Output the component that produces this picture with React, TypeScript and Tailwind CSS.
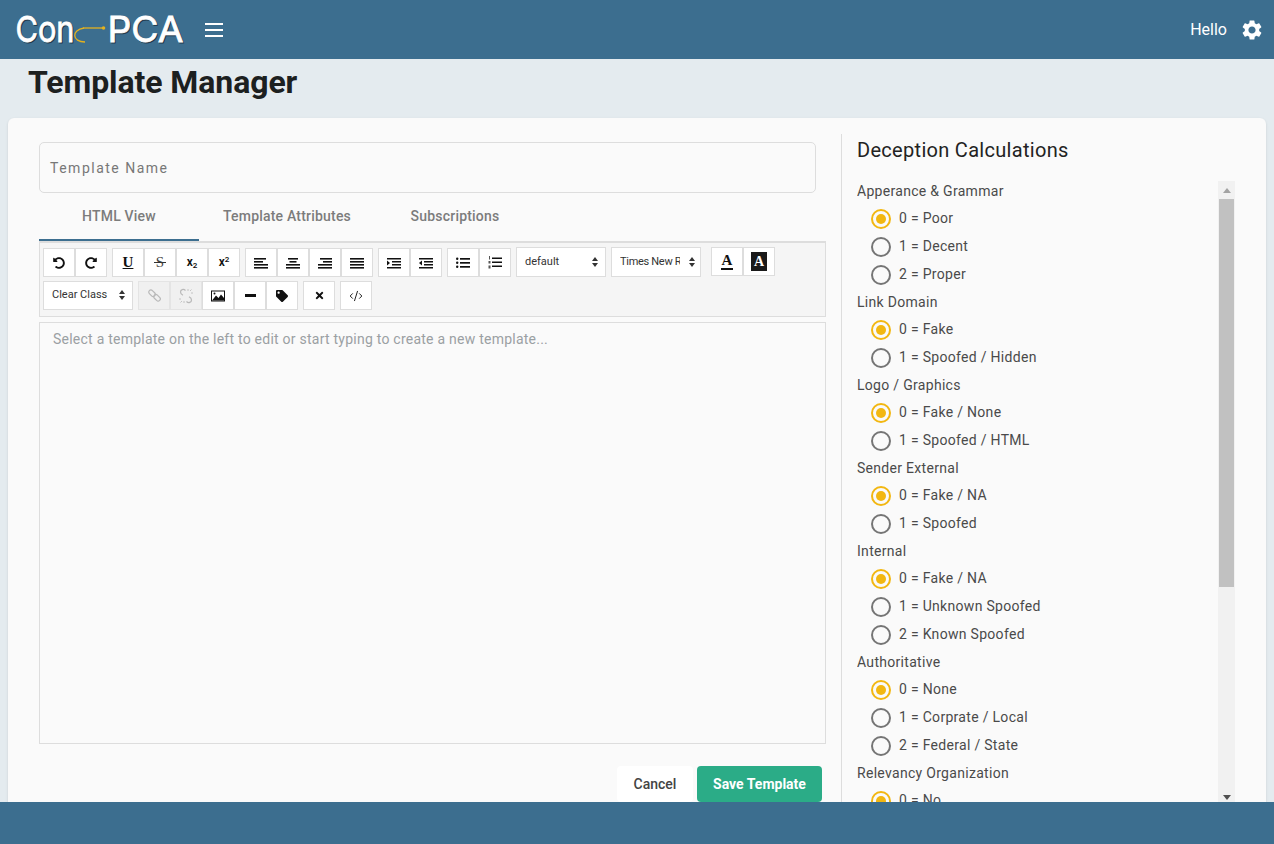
import React from 'react';
import { CodeXml } from 'lucide-react';
import { MdSettings } from 'react-icons/md';
import { FaTag, FaTimes, FaUndoAlt, FaRedoAlt } from 'react-icons/fa';

const groups = [
  { label: 'Apperance & Grammar', options: ['0 = Poor', '1 = Decent', '2 = Proper'] },
  { label: 'Link Domain', options: ['0 = Fake', '1 = Spoofed / Hidden'] },
  { label: 'Logo / Graphics', options: ['0 = Fake / None', '1 = Spoofed / HTML'] },
  { label: 'Sender External', options: ['0 = Fake / NA', '1 = Spoofed'] },
  { label: 'Internal', options: ['0 = Fake / NA', '1 = Unknown Spoofed', '2 = Known Spoofed'] },
  { label: 'Authoritative', options: ['0 = None', '1 = Corprate / Local', '2 = Federal / State'] },
  { label: 'Relevancy Organization', options: ['0 = No', '1 = Yes'] },
];

function Bars({ rows }: { rows: number[][] }) {
  return (
    <svg width="14" height="12" viewBox="0 0 14 12" fill="#111">
      {rows.map((r, i) => (
        <rect key={i} x={r[0]} y={r[1]} width={r[2]} height="1.6" />
      ))}
    </svg>
  );
}

const alignLeft = [[0, 1, 12], [0, 4, 9], [0, 7, 14], [0, 10, 14]];
const alignCenter = [[2, 1, 10], [3.5, 4, 7], [0, 7, 14], [0, 10, 14]];
const alignRight = [[2, 1, 12], [5, 4, 9], [0, 7, 14], [0, 10, 14]];
const alignFull = [[0, 1, 14], [0, 4, 14], [0, 7, 14], [0, 10, 14]];

function Indent({ flip }: { flip?: boolean }) {
  return (
    <svg width="14" height="12" viewBox="0 0 14 12" fill="#111">
      <rect x="0" y="1" width="14" height="1.5" />
      <rect x="5" y="4" width="9" height="1.5" />
      <rect x="5" y="7" width="9" height="1.5" />
      <rect x="0" y="10" width="14" height="1.5" />
      {flip ? <path d="M3 3.6 L0 6 L3 8.4 Z" /> : <path d="M0 3.6 L3 6 L0 8.4 Z" />}
    </svg>
  );
}

function BulletList() {
  return (
    <svg width="14" height="12" viewBox="0 0 14 12" fill="#111">
      <rect x="4" y="1" width="10" height="1.7" />
      <rect x="4" y="5" width="10" height="1.7" />
      <rect x="4" y="9" width="10" height="1.7" />
      <circle cx="1.2" cy="1.8" r="1.2" />
      <circle cx="1.2" cy="5.8" r="1.2" />
      <circle cx="1.2" cy="9.8" r="1.2" />
    </svg>
  );
}

function NumberList() {
  return (
    <svg width="14" height="13" viewBox="0 0 14 13" fill="#111">
      <rect x="4" y="1.5" width="10" height="1.5" />
      <rect x="4" y="5.5" width="10" height="1.5" />
      <rect x="4" y="9.5" width="10" height="1.5" />
      <rect x="1" y="0" width="1" height="3.5" fill="#555" />
      <rect x="0.5" y="5" width="2" height="2.5" fill="#555" />
      <rect x="0.5" y="9.5" width="2" height="3" fill="#555" />
    </svg>
  );
}

function Picture() {
  return (
    <svg width="14" height="12" viewBox="0 0 14 12">
      <rect x="0.5" y="1" width="13" height="10" fill="#fff" stroke="#111" />
      <path d="M1 10.5 L5 5.5 L7.5 8 L10 4.5 L13 8 V10.5 Z" fill="#111" />
      <circle cx="3.5" cy="3.4" r="1" fill="#111" />
    </svg>
  );
}

function ChainLink() {
  return (
    <svg width="13" height="13" viewBox="0 0 14 14" fill="none" stroke="#a0a0a0" strokeWidth="1.3">
      <rect x="0.3" y="2.2" width="8" height="4.6" rx="2.3" transform="rotate(45 4.3 4.5)" />
      <rect x="5.7" y="7.2" width="8" height="4.6" rx="2.3" transform="rotate(45 9.7 9.5)" />
    </svg>
  );
}

function ChainBroken() {
  return (
    <svg width="14" height="16" viewBox="0 0 14 16" fill="none" stroke="#a0a0a0" strokeWidth="1.2">
      <path d="M6.5 2.5 C4.5 0.5 1.5 1.5 1.5 4 C1.5 5.5 2.5 6.5 4 7.2" />
      <path d="M7.5 13.5 C9.5 15.5 12.5 14.5 12.5 12 C12.5 10.5 11.5 9.5 10 8.8" />
      <path d="M9 1 V3 M11 3 L12.5 1.5 M12 5 H14 M0 11 H2 M1.5 14.5 L3 13 M5 13 V15" strokeWidth="0.8" />
    </svg>
  );
}

function Carets() {
  return (
    <svg width="6" height="10" viewBox="0 0 6 10" fill="#333">
      <path d="M3 0 L6 4 H0 Z" />
      <path d="M3 10 L0 6 H6 Z" />
    </svg>
  );
}

function Btn({ children, disabled }: { children: React.ReactNode; disabled?: boolean }) {
  return (
    <div className={`w-8 h-[29px] flex items-center justify-center border border-[#dddddd] ${disabled ? 'bg-[#eeeeee] opacity-70' : 'bg-white'}`}>
      {children}
    </div>
  );
}

function Sel({ text, className }: { text: string; className: string }) {
  return (
    <div className={`h-[30px] flex items-center justify-between bg-white border border-[#dddddd] text-[11px] text-[#333333] ${className}`}>
      <span className="whitespace-nowrap">{text}</span>
      <Carets />
    </div>
  );
}

function Radio({ checked, label }: { checked: boolean; label: string }) {
  return (
    <div className="h-7 flex items-center pl-[14px] gap-2">
      <span className={`mt-px w-5 h-5 rounded-full border-2 flex items-center justify-center ${checked ? 'border-[#f2b711]' : 'border-[#757575]'}`}>
        {checked && <span className="w-[10px] h-[10px] rounded-full bg-[#f2b711]" />}
      </span>
      <span>{label}</span>
    </div>
  );
}

function Logo() {
  const font = '"Inter", "Liberation Sans", sans-serif';
  return (
    <svg width="172" height="44" viewBox="0 0 172 44" className="block">
      <g fontFamily={font} fontSize="36" fontWeight="400">
        <g fill="#22394a" stroke="#22394a" strokeWidth="0.8">
          <text x="1.5" y="34.5" textLength="59" lengthAdjust="spacingAndGlyphs">Con</text>
          <text x="93.5" y="34.5" textLength="76" lengthAdjust="spacingAndGlyphs">PCA</text>
        </g>
        <g fill="#ffffff" stroke="#ffffff" strokeWidth="0.8">
          <text x="0.5" y="33.5" textLength="59" lengthAdjust="spacingAndGlyphs">Con</text>
          <text x="92.5" y="33.5" textLength="76" lengthAdjust="spacingAndGlyphs">PCA</text>
        </g>
      </g>
      <path d="M68 20 H88" stroke="#e3b11f" strokeWidth="1.3" fill="none" />
      <circle cx="88.5" cy="20" r="1.8" fill="#e3b11f" />
      <path d="M69 20 C56 22 57 34 70 34" stroke="#e3b11f" strokeWidth="1.3" fill="none" />
    </svg>
  );
}

export default function App() {
  return (
    <div className="h-[844px] flex flex-col overflow-hidden bg-[#e4ebef] font-['Roboto',sans-serif] text-sm text-[#333333]">
      <header className="h-[59px] shrink-0 bg-[#3c6e8f] flex items-center pl-[15px] pr-[10px] text-white">
        <Logo />
        <div className="ml-[18px] w-[18px] flex flex-col gap-[4px]">
          <span className="h-[2px] bg-white" />
          <span className="h-[2px] bg-white" />
          <span className="h-[2px] bg-white" />
        </div>
        <span className="ml-auto text-base">Hello</span>
        <MdSettings className="ml-[13px] text-[24px]" />
      </header>

      <main className="flex-1 min-h-0 overflow-hidden">
        <h1 className="h-[59px] pl-[28px] pt-[3px] text-[32px] leading-[40px] font-bold tracking-[-0.08px] text-[#1c2020]">Template Manager</h1>
        <div className="mx-2 h-[700px] rounded-md bg-[#fafafa] shadow-sm flex">
          <div className="ml-[31px] w-[787px] pt-6">
            <div className="w-[777px] h-[51px] flex items-center px-[10px] border border-[#dddddd] rounded-[5px] tracking-[1.5px] text-[#777777]">
              Template Name
            </div>
            <div className="h-[48px] flex gap-2 text-[#7c7c7c] font-medium tracking-[0.2px]">
              <div className="w-40 pb-px flex items-center justify-center border-b-2 border-[#3c6e8f]">HTML View</div>
              <div className="w-40 pb-[3px] flex items-center justify-center">Template Attributes</div>
              <div className="w-40 pb-[3px] flex items-center justify-center">Subscriptions</div>
            </div>
            <div className="h-[76px] bg-[#f5f5f5] border border-t-2 border-[#dddddd] px-[3px] pt-[5px]">
              <div className="flex gap-[5px] items-start">
                <div className="flex">
                  <Btn><FaUndoAlt size={12} color="#111" /></Btn>
                  <Btn><FaRedoAlt size={12} color="#111" /></Btn>
                </div>
                <div className="flex text-[#111111]">
                  <Btn><span className="font-['Liberation_Serif',serif] font-semibold text-[15px] underline">U</span></Btn>
                  <Btn>
                    <span className="relative px-[2px] font-['Liberation_Serif',serif] text-[15px] text-[#444444]">
                      S
                      <span className="absolute left-0 right-0 top-[10px] h-px bg-[#333333]" />
                    </span>
                  </Btn>
                  <Btn><span className="font-semibold text-[12px]">x<sub className="text-[8px]">2</sub></span></Btn>
                  <Btn><span className="font-semibold text-[12px]">x<sup className="text-[8px]">2</sup></span></Btn>
                </div>
                <div className="flex">
                  <Btn><Bars rows={alignLeft} /></Btn>
                  <Btn><Bars rows={alignCenter} /></Btn>
                  <Btn><Bars rows={alignRight} /></Btn>
                  <Btn><Bars rows={alignFull} /></Btn>
                </div>
                <div className="flex">
                  <Btn><Indent /></Btn>
                  <Btn><Indent flip /></Btn>
                </div>
                <div className="flex">
                  <Btn><BulletList /></Btn>
                  <Btn><NumberList /></Btn>
                </div>
                <Sel text="default" className="w-[90px] pl-2 pr-[7px] -mt-px" />
                <Sel text="Times New Roman" className="w-[90px] pl-2 pr-[5px] -mt-px tracking-[-0.3px] [&>span]:w-[60px] [&>span]:overflow-hidden" />
                <div className="flex ml-[5px] -mt-px">
                  <Btn>
                    <span className="font-['Liberation_Serif',serif] font-bold text-[15px] leading-[15px] text-[#111111] border-b-2 border-[#111111] px-px">A</span>
                  </Btn>
                  <Btn>
                    <span className="w-4 h-[19px] flex items-center justify-center bg-[#1a1a1a] text-white font-['Liberation_Serif',serif] font-bold text-[14px]">A</span>
                  </Btn>
                </div>
              </div>
              <div className="flex gap-[5px] mt-[4px]">
                <div className="w-[90px] h-[29px] pb-px flex items-center justify-between pl-2 pr-[7px] bg-white border border-[#dddddd] text-[11px]">
                  Clear Class
                  <Carets />
                </div>
                <div className="flex">
                  <Btn disabled><ChainLink /></Btn>
                  <Btn disabled><ChainBroken /></Btn>
                  <Btn><Picture /></Btn>
                  <Btn><span className="w-[11px] h-[3px] bg-[#111111]" /></Btn>
                  <Btn><FaTag size={12} color="#111" /></Btn>
                </div>
                <Btn><FaTimes size={11} color="#111" /></Btn>
                <Btn><CodeXml size={14} color="#111" strokeWidth={1.6} /></Btn>
              </div>
            </div>
            <div className="mt-[5px] h-[422px] border border-[#dddddd] px-[13px] pt-[6px] text-[#9aa0a3] tracking-[0.24px]">
              Select a template on the left to edit or start typing to create a new template...
            </div>
            <div className="mt-[22px] pr-1 flex justify-end gap-1 font-medium">
              <button className="w-[76px] h-9 rounded bg-white text-[#444444]">Cancel</button>
              <button className="w-[125px] h-9 rounded bg-[#2bac87] text-white font-bold">Save Template</button>
            </div>
          </div>

          <aside className="ml-[15px] mt-4 w-[394px] border-l border-[#dddddd] pl-[15px] flex flex-col min-h-0">
            <h2 className="h-8 shrink-0 mb-[15px] flex items-center text-xl font-[450] tracking-[0.3px] text-[#222222]">Deception Calculations</h2>
            <div className="flex items-start">
              <div className="w-[361px] h-[621px] overflow-hidden tracking-[0.3px] text-[#4a4a4a]">
                {groups.map((g) => (
                  <div key={g.label} className="mb-1">
                    <div className="h-5 leading-5 mb-[3px]">{g.label}</div>
                    {g.options.map((o, i) => (
                      <Radio key={o} checked={i === 0} label={o} />
                    ))}
                  </div>
                ))}
              </div>
              <div className="w-[17px] h-[621px] bg-[#f1f1f1] flex flex-col items-center">
                <div className="h-[18px] flex items-center">
                  <svg width="8" height="5" viewBox="0 0 8 5" fill="#a3a3a3"><path d="M4 0 L8 5 H0 Z" /></svg>
                </div>
                <div className="w-[15px] h-[388px] bg-[#c1c1c1]" />
                <div className="mt-auto h-[10px] flex items-center">
                  <svg width="8" height="5" viewBox="0 0 8 5" fill="#505050"><path d="M4 5 L0 0 H8 Z" /></svg>
                </div>
              </div>
            </div>
          </aside>
        </div>
      </main>

      <footer className="h-[42px] shrink-0 bg-[#3c6e8f]" />
    </div>
  );
}
